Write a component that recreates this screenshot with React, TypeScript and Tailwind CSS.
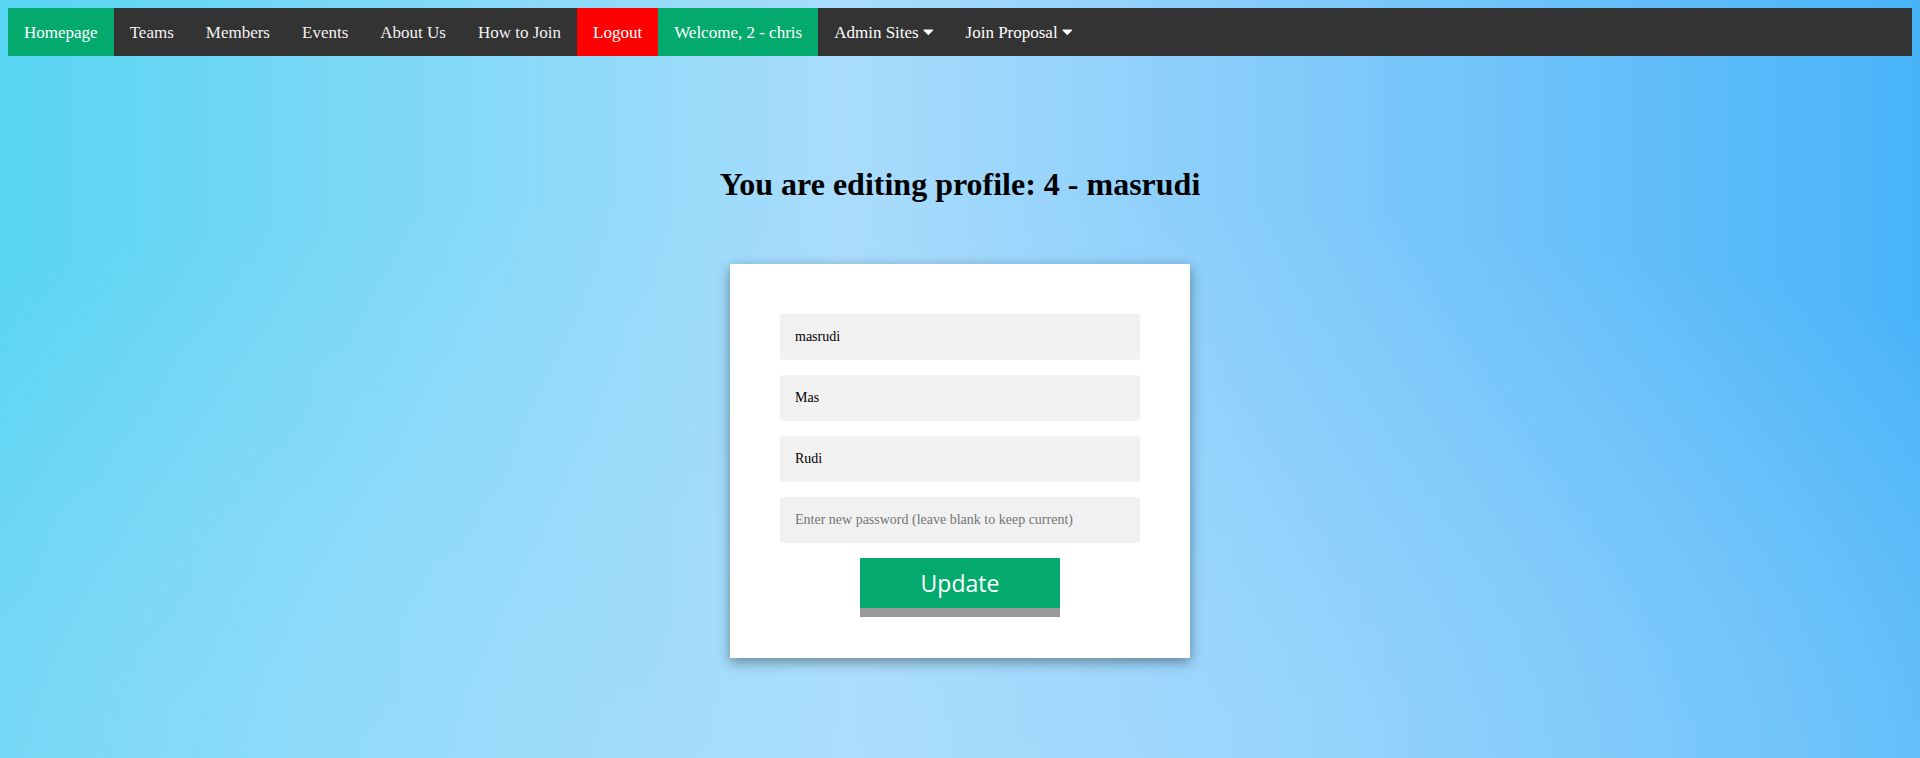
import { useState } from 'react';

const serif = "font-['Liberation_Serif','Times_New_Roman',serif]";

function Caret() {
  return (
    <svg viewBox="0 0 320 512" className="inline-block w-[10.6px] h-[17px] align-[-2px] fill-current">
      <path d="M31.3 192h257.3c17.8 0 26.7 21.5 14.1 34.1L174.1 354.8c-7.8 7.8-20.5 7.8-28.3 0L17.2 226.1C4.6 213.5 13.5 192 31.3 192z" />
    </svg>
  );
}

function Navbar() {
  const link = 'px-4 pt-[15px] pb-[13px] text-[17px] leading-[20px] text-[#f2f2f2] whitespace-nowrap';
  return (
    <nav className="flex bg-[#333333]">
      <a href="#" className={`${link} bg-[#04aa6d] text-white`}>Homepage</a>
      <a href="#" className={link}>Teams</a>
      <a href="#" className={link}>Members</a>
      <a href="#" className={link}>Events</a>
      <a href="#" className={link}>About Us</a>
      <a href="#" className={link}>How to Join</a>
      <a href="#" className={`${link} bg-[#ff0000] text-white`}>Logout</a>
      <a href="#" className={`${link} bg-[#04aa6d] text-white`}>Welcome, 2 - chris</a>
      <button className={`${link} ${serif} text-white`}>
        Admin Sites <Caret />
      </button>
      <button className={`${link} ${serif} text-white`}>
        Join Proposal <Caret />
      </button>
    </nav>
  );
}

export default function App() {
  const [username, setUsername] = useState('masrudi');
  const [first, setFirst] = useState('Mas');
  const [last, setLast] = useState('Rudi');
  const [password, setPassword] = useState('');

  const input =
    `w-full h-[46px] px-[15px] rounded-[4px] bg-[#f1f1f1] text-[14px] text-black outline-none placeholder:text-[#757575] ${serif}`;

  return (
    <div
      className={`min-h-screen p-2 ${serif} bg-[radial-gradient(ellipse_90%_80%_at_45%_105%,rgba(172,221,253,0.65)_0%,rgba(172,221,253,0.35)_50%,rgba(172,221,253,0)_100%),linear-gradient(to_right,#58d5f2_0%,#a9dcfc_44%,#8ccffb_62%,#48b3f8_100%)]`}
    >
      <Navbar />

      <h1 className="mt-[110px] mb-[61px] text-center text-[32px] leading-[37px] font-bold text-black">
        You are editing profile: 4 - masrudi
      </h1>

      <div className="mx-auto w-[460px] bg-white p-[50px] shadow-[0_4px_12px_rgba(0,0,0,0.4)]">
        <form className="flex flex-col items-center gap-[15px]" onSubmit={(e) => e.preventDefault()}>
          <input className={input} value={username} onChange={(e) => setUsername(e.target.value)} />
          <input className={input} value={first} onChange={(e) => setFirst(e.target.value)} />
          <input className={input} value={last} onChange={(e) => setLast(e.target.value)} />
          <input
            type="password"
            className={input}
            placeholder="Enter new password (leave blank to keep current)"
            value={password}
            onChange={(e) => setPassword(e.target.value)}
          />
          <button
            type="submit"
            className="w-[200px] h-[50px] bg-[#04aa6d] text-white text-[23px] font-['Open_Sans',sans-serif] shadow-[0_9px_#999999]"
          >
            Update
          </button>
        </form>
      </div>
    </div>
  );
}
